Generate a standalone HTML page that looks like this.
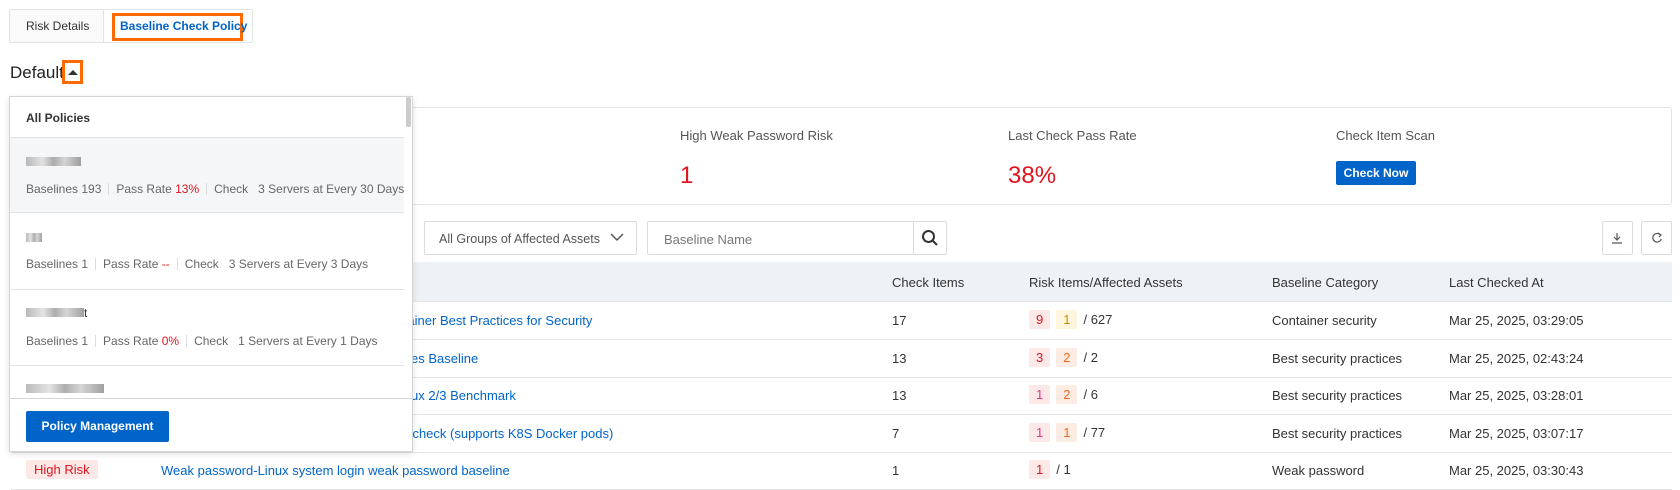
<!DOCTYPE html>
<html><head><meta charset="utf-8"><style>
*{box-sizing:border-box;margin:0;padding:0}
body{width:1680px;height:487px;overflow:hidden;background:#fff;font-family:"Liberation Sans",sans-serif;font-size:13px;color:#333;position:relative}
.a{position:absolute}
.link{color:#0064c8}
.red{color:#e0141e}
.tabs{left:9px;top:9px;width:244px;height:34px;border:1px solid #e3e3e3;border-radius:2px;background:#fafafa}
.b{display:inline-block;padding:2px 7px;border-radius:2px;margin-right:6px;font-size:13px}
.row{position:absolute;left:11px;width:1661px;height:38px;border-bottom:1px solid #e5e5e5}
.row span{position:absolute;top:11px;white-space:nowrap}
.meta{color:#666;font-size:12px;white-space:nowrap}
.sepv{display:inline-block;width:1px;height:12px;background:#ddd;margin:0 7px;vertical-align:-2px}
.blur{display:inline-block;height:9px;background:linear-gradient(90deg,#aaa,#ddd 30%,#999 50%,#ccc 70%,#888);opacity:.8}
</style></head><body>
<div class="a tabs"></div>
<div class="a" style="left:103px;top:10px;width:1px;height:32px;background:#e3e3e3"></div>
<div class="a" style="left:104px;top:10px;width:148px;height:32px;background:#fff"></div>
<div class="a" style="left:26px;top:19px;color:#333;font-size:12px">Risk Details</div>
<div class="a" style="left:112px;top:13px;width:131px;height:28px;border:3px solid #ff6a00"></div>
<div class="a link" style="left:120px;top:19px;font-size:12px;font-weight:bold">Baseline Check Policy</div>
<div class="a" style="left:10px;top:63px;font-size:17px;color:#222">Default</div>
<div class="a" style="left:62px;top:60px;width:21px;height:24px;border:3px solid #ff6a00"></div>
<div class="a" style="left:68px;top:70px;width:0;height:0;border-left:5px solid transparent;border-right:5px solid transparent;border-bottom:5px solid #333"></div>

<div class="a" style="left:11px;top:107px;width:1661px;height:98px;border:1px solid #e3e3e3;border-radius:3px"></div>
<div class="a" style="left:680px;top:128px;color:#555">High Weak Password Risk</div>
<div class="a red" style="left:680px;top:162px;font-size:24px">1</div>
<div class="a" style="left:1008px;top:128px;color:#555">Last Check Pass Rate</div>
<div class="a red" style="left:1008px;top:162px;font-size:24px">38%</div>
<div class="a" style="left:1336px;top:128px;color:#555">Check Item Scan</div>
<div class="a" style="left:1336px;top:161px;width:80px;height:24px;background:#0064c8;color:#fff;font-weight:bold;font-size:12px;text-align:center;line-height:24px;border-radius:2px">Check Now</div>

<div class="a" style="left:424px;top:221px;width:213px;height:34px;border:1px solid #dcdcdc;border-radius:2px;color:#555;padding:10px 14px;font-size:12.5px">All Groups of Affected Assets</div>
<svg class="a" style="left:610px;top:232px" width="14" height="10"><path d="M1 2 L7 8 L13 2" fill="none" stroke="#555" stroke-width="1.5"/></svg>
<div class="a" style="left:647px;top:221px;width:267px;height:34px;border:1px solid #dcdcdc;border-radius:2px 0 0 2px;color:#777;padding:10px 16px">Baseline Name</div>
<div class="a" style="left:913px;top:221px;width:34px;height:34px;border:1px solid #dcdcdc;border-radius:0 2px 2px 0"></div>
<svg class="a" style="left:921px;top:229px" width="18" height="18"><circle cx="7.5" cy="7.5" r="5.5" fill="none" stroke="#333" stroke-width="2"/><path d="M11.5 11.5 L16 16" stroke="#333" stroke-width="2"/></svg>
<div class="a" style="left:1602px;top:221px;width:31px;height:34px;border:1px solid #dcdcdc;border-radius:2px"></div>
<svg class="a" style="left:1611px;top:232px" width="12" height="12"><path d="M6 1 V8 M3 5 L6 8 L9 5 M1 11 H11" fill="none" stroke="#555" stroke-width="1.2"/></svg>
<div class="a" style="left:1641px;top:221px;width:31px;height:34px;border:1px solid #dcdcdc;border-radius:2px"></div>
<svg class="a" style="left:1651px;top:232px" width="12" height="12"><path d="M9.5 3 A4.3 4.3 0 1 0 10.3 7" fill="none" stroke="#555" stroke-width="1.2"/><path d="M7 1 L10 3 L8 5" fill="none" stroke="#555" stroke-width="1.2"/></svg>

<div class="row" style="top:262px;height:40px;background:#eef1f5;border-bottom:1px solid #e5e5e5">
<span style="left:881px;top:13px">Check Items</span><span style="left:1018px;top:13px">Risk Items/Affected Assets</span><span style="left:1261px;top:13px">Baseline Category</span><span style="left:1438px;top:13px">Last Checked At</span></div>
<div class="row" style="top:302px"><span class="link" style="left:150px">Alibaba Cloud Standard - Kubernetes Container Best Practices for Security</span><span style="left:881px">17</span><span style="left:1018px;top:8px"><i class="b" style="background:#fde8e8;color:#e0141e;font-style:normal">9</i><i class="b" style="background:#fdf5dd;color:#c88f00;font-style:normal">1</i>/ 627</span><span style="left:1261px">Container security</span><span style="left:1438px">Mar 25, 2025, 03:29:05</span></div>
<div class="row" style="top:340px"><span class="link" style="left:150px">Alibaba Cloud Linux 3 Security Best Practices Baseline</span><span style="left:881px">13</span><span style="left:1018px;top:8px"><i class="b" style="background:#fde8e8;color:#e0141e;font-style:normal">3</i><i class="b" style="background:#fdece4;color:#f06a1e;font-style:normal">2</i>/ 2</span><span style="left:1261px">Best security practices</span><span style="left:1438px">Mar 25, 2025, 02:43:24</span></div>
<div class="row" style="top:377px"><span class="link" style="left:150px">Alibaba Cloud Standard - Alibaba Cloud Linux 2/3 Benchmark</span><span style="left:881px">13</span><span style="left:1018px;top:8px"><i class="b" style="background:#fde8e8;color:#e8338a;font-style:normal">1</i><i class="b" style="background:#fdece4;color:#f06a1e;font-style:normal">2</i>/ 6</span><span style="left:1261px">Best security practices</span><span style="left:1438px">Mar 25, 2025, 03:28:01</span></div>
<div class="row" style="top:415px"><span class="link" style="left:150px">Container security - Linux security baseline check (supports K8S Docker pods)</span><span style="left:881px">7</span><span style="left:1018px;top:8px"><i class="b" style="background:#fde8e8;color:#e8338a;font-style:normal">1</i><i class="b" style="background:#fdece4;color:#f06a1e;font-style:normal">1</i>/ 77</span><span style="left:1261px">Best security practices</span><span style="left:1438px">Mar 25, 2025, 03:07:17</span></div>
<div class="row" style="top:452px"><span style="left:15px;top:8px"><i class="b" style="background:#fde8e8;color:#e0141e;font-style:normal;padding:2px 8px">High Risk</i></span><span class="link" style="left:150px">Weak password-Linux system login weak password baseline</span><span style="left:881px">1</span><span style="left:1018px;top:8px"><i class="b" style="background:#fde8e8;color:#e0141e;font-style:normal">1</i>/ 1</span><span style="left:1261px">Weak password</span><span style="left:1438px">Mar 25, 2025, 03:30:43</span></div>

<div class="a" style="left:9px;top:96px;width:404px;height:356px;background:#fff;border:1px solid #d5d5d5;box-shadow:0 2px 6px rgba(0,0,0,.12)">
<div class="a" style="left:396px;top:0;width:5px;height:30px;background:#ccc;border-radius:2px"></div>
<div class="a" style="left:16px;top:14px;font-weight:bold;color:#333;font-size:12px">All Policies</div>
<div class="a" style="left:0;top:40px;width:394px;height:76px;background:#f5f6f8;border-top:1px solid #e3e3e3;border-bottom:1px solid #e3e3e3"></div>
<div class="a" style="left:16px;top:57px"><i class="blur" style="width:55px"></i></div>
<div class="a meta" style="left:16px;top:85px">Baselines 193<i class="sepv"></i>Pass Rate <span class="red">13%</span><i class="sepv"></i>Check &nbsp; 3 Servers at Every 30 Days</div>
<div class="a" style="left:16px;top:133px"><i class="blur" style="width:16px"></i></div>
<div class="a meta" style="left:16px;top:160px">Baselines 1<i class="sepv"></i>Pass Rate <span class="red">--</span><i class="sepv"></i>Check &nbsp; 3 Servers at Every 3 Days</div>
<div class="a" style="left:0;top:192px;width:394px;height:1px;background:#e3e3e3"></div>
<div class="a" style="left:16px;top:209px;font-size:12px"><i class="blur" style="width:58px"></i>t</div>
<div class="a meta" style="left:16px;top:237px">Baselines 1<i class="sepv"></i>Pass Rate <span class="red">0%</span><i class="sepv"></i>Check &nbsp; 1 Servers at Every 1 Days</div>
<div class="a" style="left:0;top:268px;width:394px;height:1px;background:#e3e3e3"></div>
<div class="a" style="left:16px;top:284px"><i class="blur" style="width:78px"></i></div>
<div class="a" style="left:0;top:301px;width:402px;height:1px;background:#d5d5d5"></div>
<div class="a" style="left:16px;top:314px;width:143px;height:31px;background:#0064c8;color:#fff;font-weight:bold;font-size:12px;text-align:center;line-height:31px;border-radius:2px">Policy Management</div>
</div>
</body></html>
